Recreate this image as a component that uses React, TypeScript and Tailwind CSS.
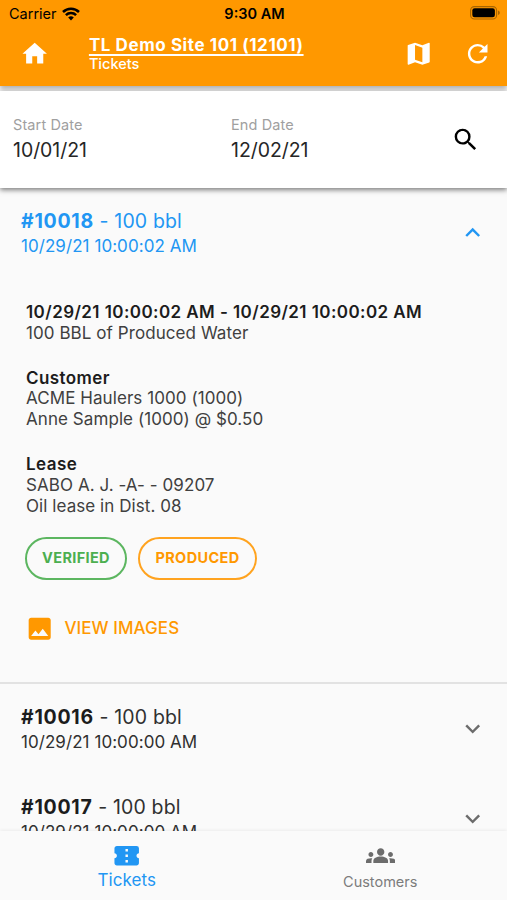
import { useState } from 'react';
import {
  MdConfirmationNumber,
  MdExpandLess,
  MdExpandMore,
  MdGroups,
  MdHome,
  MdImage,
  MdMap,
  MdRefresh,
  MdSearch,
} from 'react-icons/md';

const ICON_SIZE = 29.4;

type Ticket = {
  id: string;
  volume: string;
  date: string;
};

const tickets: Ticket[] = [
  { id: '#10018', volume: '100 bbl', date: '10/29/21 10:00:02 AM' },
  { id: '#10016', volume: '100 bbl', date: '10/29/21 10:00:00 AM' },
  { id: '#10017', volume: '100 bbl', date: '10/29/21 10:00:00 AM' },
];

const WifiIcon = () => (
  <svg width="18" height="14" viewBox="0 0 18 14" fill="none" stroke="#000" strokeWidth="2.5">
    <path d="M1 5a11.3 11.3 0 0 1 16 0" />
    <path d="M3.9 8.1a7.2 7.2 0 0 1 10.2 0" />
    <path d="M9 13.4 6.2 10.5a4 4 0 0 1 5.6 0z" fill="#000" stroke="none" />
  </svg>
);

const StatusBar = () => (
  <div className="grid h-[27px] grid-cols-3 items-center pl-[9px] pr-[7px] text-black">
    <div className="flex items-center gap-[5px]">
      <span className="text-[14.5px] leading-5">Carrier</span>
      <WifiIcon />
    </div>
    <span className="text-center text-[14.5px] font-semibold leading-5">9:30 AM</span>
    <svg className="-mt-px justify-self-end" width="30" height="14" viewBox="0 0 30 14">
      <rect x="0.6" y="0.6" width="26" height="12.4" rx="3.8" fill="none" stroke="#a86500" strokeWidth="1.1" />
      <rect x="2.3" y="2.3" width="22.6" height="9" rx="2.3" fill="#000" />
      <path d="M28 4.6c1.4.5 1.8 1.3 1.8 2.2s-.4 1.7-1.8 2.2z" fill="#a86500" />
    </svg>
  </div>
);

const Header = () => (
  <header className="relative z-10 mb-[5px] h-[86px] shrink-0 bg-[#ff9800] shadow-[0_3px_5px_rgba(0,0,0,0.3)]">
    <StatusBar />
    <div className="flex h-[53px] items-center pl-[20px] pr-[15px] text-white">
      <MdHome size={ICON_SIZE} />
      <div className="ml-[39.5px] flex-1">
        <h1 className="text-[17px] font-bold leading-5 tracking-[0.58px] underline decoration-[1.5px] underline-offset-[2.5px] [text-decoration-skip-ink:none]">
          TL Demo Site 101 (12101)
        </h1>
        <p className="text-[14.5px] font-medium leading-[18px]">Tickets</p>
      </div>
      <MdMap size={ICON_SIZE} />
      <MdRefresh size={ICON_SIZE} className="ml-[29px]" />
    </div>
  </header>
);

const DateField = ({ label, value }: { label: string; value: string }) => (
  <div className="w-[218px]">
    <p className="text-[14.5px] leading-[18px] tracking-[0.12px] text-[#a0a0a0]">{label}</p>
    <p className="mt-[4px] text-[19.5px] leading-[25px] tracking-[-0.05px] text-[#262626]">{value}</p>
  </div>
);

const Filters = () => (
  <section className="relative z-20 flex h-[97px] shrink-0 items-center bg-white pl-[13px] shadow-[0_2px_5px_rgba(0,0,0,0.5)]">
    <DateField label="Start Date" value="10/01/21" />
    <DateField label="End Date" value="12/02/21" />
    <MdSearch size={ICON_SIZE} className="ml-[1.5px] text-black" />
  </section>
);

const TicketDetails = () => (
  <div className="h-[406px] border-b-2 border-[#e2e2e2] pl-[26px] pt-[23.9px] text-[17px] leading-[20.8px] tracking-[0.07px] text-[#404040]">
    <p className="font-semibold tracking-[0.43px] text-[#1c1c1c]">10/29/21 10:00:02 AM - 10/29/21 10:00:02 AM</p>
    <p>100 BBL of Produced Water</p>

    <p className="mt-[24.2px] font-semibold tracking-[0.43px] text-[#1c1c1c]">Customer</p>
    <p>ACME Haulers 1000 (1000)</p>
    <p>Anne Sample (1000) @ $0.50</p>

    <p className="mt-[24.2px] font-semibold tracking-[0.43px] text-[#1c1c1c]">Lease</p>
    <p>SABO A. J. -A- - 09207</p>
    <p>Oil lease in Dist. 08</p>

    <div className="-ml-px mt-[20px] flex gap-[11px] text-[14.5px] font-bold tracking-[0.35px]">
      <span className="flex h-[43px] w-[102px] items-center justify-center rounded-full border-2 border-[#5cb660] text-[#4caf50]">
        VERIFIED
      </span>
      <span className="flex h-[43px] w-[119px] items-center justify-center rounded-full border-2 border-[#ffa31f] text-[#ff9800]">
        PRODUCED
      </span>
    </div>

    <button className="-ml-px mt-[34px] flex items-center gap-[10px] font-medium text-[#ff9800]">
      <MdImage size={ICON_SIZE} />
      VIEW IMAGES
    </button>
  </div>
);

type TicketRowProps = {
  ticket: Ticket;
  open: boolean;
  onToggle: () => void;
};

const TicketRow = ({ ticket, open, onToggle }: TicketRowProps) => (
  <div>
    <button
      onClick={onToggle}
      className={`flex h-[90px] w-full items-center justify-between pl-[21px] pr-[20px] text-left ${
        open ? 'text-[#2196f3]' : 'text-[#303030]'
      }`}
    >
      <div>
        <p className="text-[19.5px] leading-6 tracking-[0.14px]">
          <span className={`font-bold tracking-[0.75px] ${open ? '' : 'text-[#1c1c1c]'}`}>{ticket.id}</span> -{' '}
          {ticket.volume}
        </p>
        <p className="mt-[2px] text-[17px] leading-[22px] tracking-[0.06px]">{ticket.date}</p>
      </div>
      {open ? (
        <MdExpandLess size={ICON_SIZE} />
      ) : (
        <MdExpandMore size={ICON_SIZE} className="text-[#6c6c6c]" />
      )}
    </button>
    {open && <TicketDetails />}
  </div>
);

const BottomNav = () => (
  <nav className="relative z-10 flex h-[69px] shrink-0 bg-[#fafafa] shadow-[0_-1px_3px_rgba(0,0,0,0.06)]">
    <div className="flex flex-1 flex-col items-center pt-[10px] text-[#2196f3]">
      <MdConfirmationNumber size={ICON_SIZE} />
      <span className="text-[17px] leading-5 tracking-[0.05px]">Tickets</span>
    </div>
    <div className="flex flex-1 flex-col items-center pt-[10px] text-[#6c6c6c]">
      <MdGroups size={ICON_SIZE} />
      <span className="mt-[2px] text-[14.5px] leading-5 text-[#7c7c7c]">Customers</span>
    </div>
  </nav>
);

const App = () => {
  const [openId, setOpenId] = useState('#10018');

  return (
    <div className="flex h-screen w-full flex-col overflow-hidden bg-[#fafafa] font-['Inter',sans-serif]">
      <Header />
      <Filters />
      <main className="min-h-0 flex-1 overflow-hidden">
        {tickets.map((ticket) => (
          <TicketRow
            key={ticket.id}
            ticket={ticket}
            open={ticket.id === openId}
            onToggle={() => setOpenId(ticket.id === openId ? '' : ticket.id)}
          />
        ))}
      </main>
      <BottomNav />
    </div>
  );
};

export default App;
